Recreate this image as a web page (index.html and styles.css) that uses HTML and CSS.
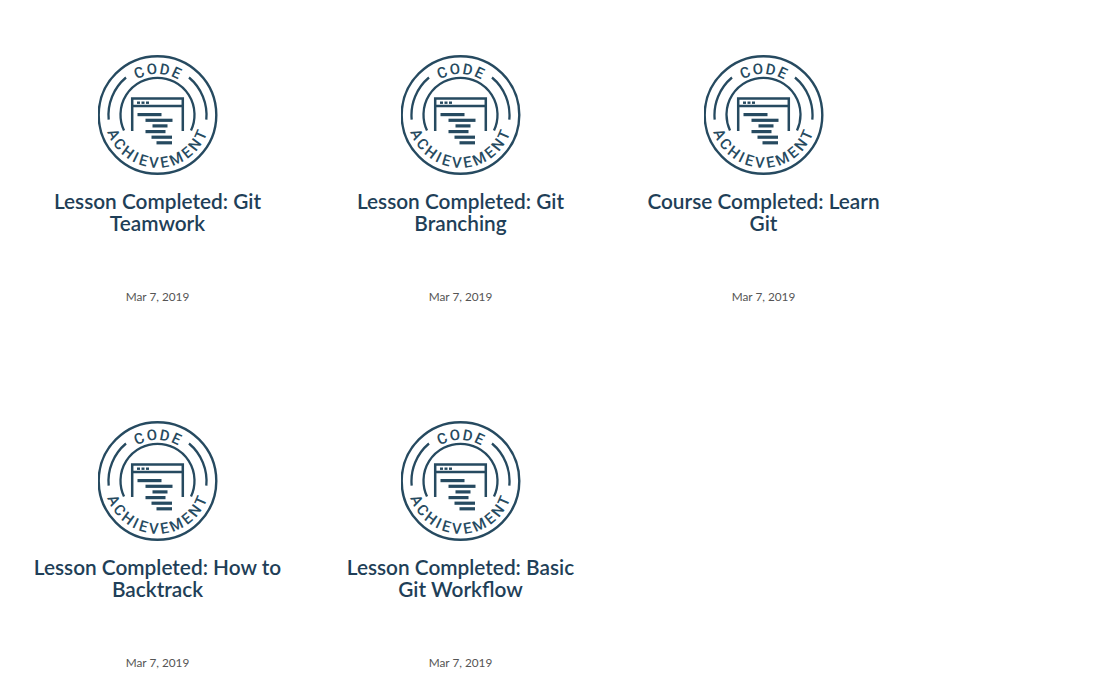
FILE: index.html
```html
<!DOCTYPE html>
<html lang="en">
<head>
<meta charset="utf-8">
<title>Achievements</title>
<link rel="stylesheet" href="styles.css">
</head>
<body>
<svg class="defs" width="0" height="0" aria-hidden="true">
  <symbol id="badge" viewBox="0.5 0 120 120">
    <defs>
      <path id="arc-top" d="M19 60A41 41 0 0 1 101 60"/>
      <path id="arc-bottom" d="M7.2 60A52.8 52.8 0 0 0 112.8 60"/>
    </defs>
    <g fill="none" stroke="#264a60">
      <circle cx="60" cy="60" r="58.8" stroke-width="2.4"/>
      <path d="M26.5 75.5A37 37 0 1 1 93.5 75.5" stroke-width="2.3"/>
      <path d="M11.2 64.7A49 49 0 0 1 28.5 22.5M91.5 22.5A49 49 0 0 1 108.8 64.7" stroke-width="2.3"/>
      <path d="M34.7 76V43.5H85.3V76M34.7 51H85.3" stroke-width="2.5"/>
    </g>
    <g fill="#264a60">
      <rect x="39.5" y="46.5" width="3" height="2.4"/><rect x="44" y="46.5" width="3" height="2.4"/><rect x="48.5" y="46.5" width="3" height="2.4"/>
      <rect x="40" y="58" width="24" height="3.2"/>
      <rect x="48" y="63.7" width="27" height="3.2"/>
      <rect x="55" y="69.3" width="15" height="3.2"/>
      <rect x="48" y="75" width="20" height="3.2"/>
      <rect x="54" y="80.6" width="20.5" height="3.2"/>
      <rect x="59" y="86.2" width="15.5" height="3.2"/>
    </g>
    <g class="badge-text">
      <text><textPath href="#arc-top" startOffset="50.5%" text-anchor="middle">CODE</textPath></text>
      <text class="badge-low"><textPath href="#arc-bottom" startOffset="50.5%" text-anchor="middle">ACHIEVEMENT</textPath></text>
    </g>
  </symbol>
</svg>
<main class="grid">
  <article class="card">
    <svg class="badge" width="120" height="120"><use href="#badge"/></svg>
    <h2 class="title">Lesson Completed: Git Teamwork</h2>
    <p class="date">Mar 7, 2019</p>
  </article>
  <article class="card">
    <svg class="badge" width="120" height="120"><use href="#badge"/></svg>
    <h2 class="title">Lesson Completed: Git Branching</h2>
    <p class="date">Mar 7, 2019</p>
  </article>
  <article class="card">
    <svg class="badge" width="120" height="120"><use href="#badge"/></svg>
    <h2 class="title">Course Completed: Learn Git</h2>
    <p class="date">Mar 7, 2019</p>
  </article>
  <article class="card">
    <svg class="badge" width="120" height="120"><use href="#badge"/></svg>
    <h2 class="title">Lesson Completed: How to Backtrack</h2>
    <p class="date">Mar 7, 2019</p>
  </article>
  <article class="card">
    <svg class="badge" width="120" height="120"><use href="#badge"/></svg>
    <h2 class="title">Lesson Completed: Basic Git Workflow</h2>
    <p class="date">Mar 7, 2019</p>
  </article>
</main>
</body>
</html>
```
FILE: styles.css
```css
* { box-sizing: border-box; }
html, body { margin: 0; padding: 0; background: #fff; }
.defs { position: absolute; }
.grid {
  display: grid;
  grid-template-columns: repeat(3, 303px);
  row-gap: 116px;
  padding: 55px 0 0 6px;
}
.card {
  display: flex;
  flex-direction: column;
  align-items: center;
  height: 250px;
}
.badge { display: block; flex: none; }
.badge-text {
  font-family: "Roboto", "Liberation Sans", sans-serif;
  font-size: 15px;
  font-weight: 500;
  letter-spacing: 1.6px;
  fill: #264a60;
}
.badge-low { letter-spacing: 2.8px; }
.title {
  margin: 15px 0 0;
  width: 255px;
  height: 100px;
  font-family: "Lato", "Noto Sans", sans-serif;
  font-size: 20.8px;
  font-weight: 600;
  line-height: 22px;
  text-align: center;
  color: #1f3f58;
}
.date {
  margin: 0;
  font-family: "Lato", "Noto Sans", sans-serif;
  font-size: 11.8px;
  line-height: 14px;
  text-align: center;
  color: #555;
}
```
